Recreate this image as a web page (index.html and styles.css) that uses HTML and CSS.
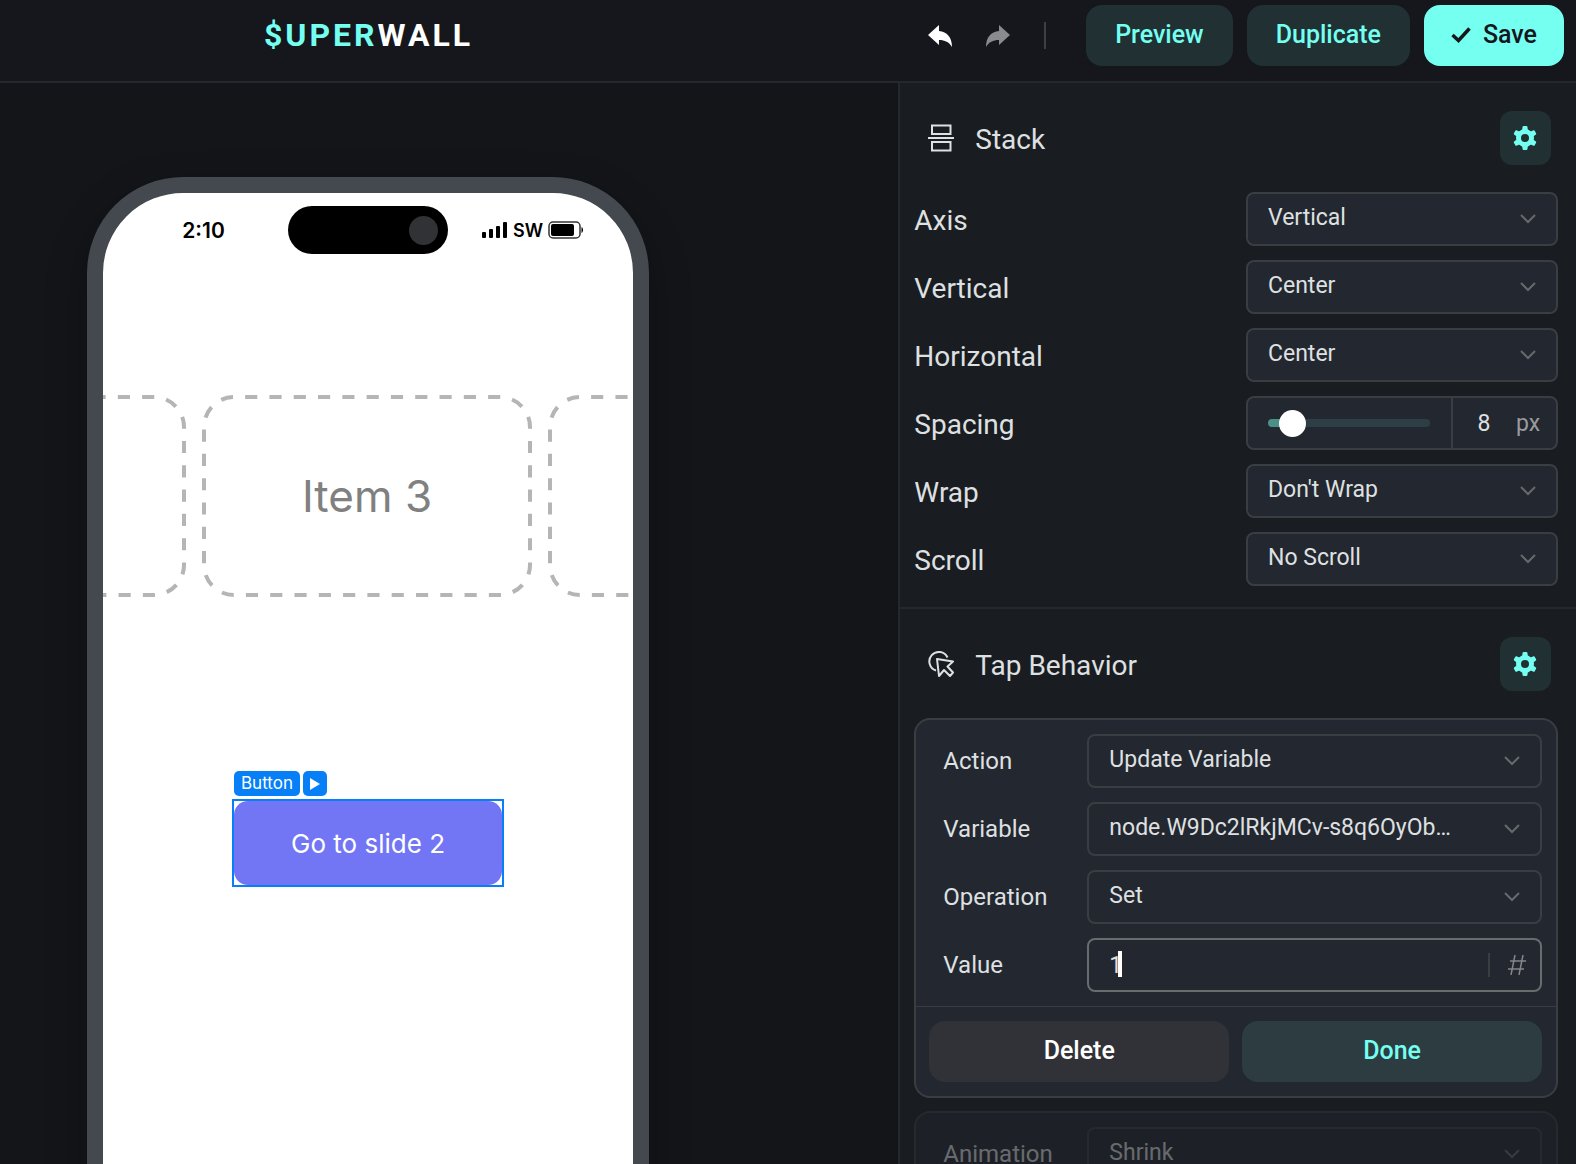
FILE: index.html
```
<!DOCTYPE html>
<html lang="en">
<head>
    <meta charset="UTF-8">
    <meta name="viewport" content="width=device-width, initial-scale=1">
    <title>Superwall Editor</title>
    <link rel="stylesheet" href="styles.css">
</head>
<body>
<!-- shared icons -->
<svg class="sprite" aria-hidden="true">
    <symbol id="chevron" viewBox="0 0 16 10">
        <path d="M1 1l7 7 7-7" fill="none" stroke="currentColor" stroke-width="2"/>
    </symbol>
    <symbol id="arrow" viewBox="0 0 24 22">
        <path d="M11 0v6c8 1 13 6 13 16-3-5-7-7-13-7v5L0 10z" fill="currentColor"/>
    </symbol>
    <symbol id="gear" viewBox="0 0 24 24">
        <circle cx="12" cy="12" r="6.500" fill="none" stroke="currentColor" stroke-width="5"/>
        <path fill="currentColor" d="M9 5l.6-4.200Q9.800 0 10.600 0h2.800q.8 0 1 .8L15 5z"/>
        <path fill="currentColor" d="M9 5l.6-4.200Q9.800 0 10.600 0h2.800q.8 0 1 .8L15 5z" transform="rotate(60 12 12)"/>
        <path fill="currentColor" d="M9 5l.6-4.200Q9.800 0 10.600 0h2.800q.8 0 1 .8L15 5z" transform="rotate(120 12 12)"/>
        <path fill="currentColor" d="M9 5l.6-4.200Q9.800 0 10.600 0h2.800q.8 0 1 .8L15 5z" transform="rotate(180 12 12)"/>
        <path fill="currentColor" d="M9 5l.6-4.200Q9.800 0 10.600 0h2.800q.8 0 1 .8L15 5z" transform="rotate(240 12 12)"/>
        <path fill="currentColor" d="M9 5l.6-4.200Q9.800 0 10.600 0h2.800q.8 0 1 .8L15 5z" transform="rotate(300 12 12)"/>
    </symbol>
    <symbol id="slot" viewBox="0 0 330 202">
        <rect x="2" y="2" width="326" height="198" rx="30" pathLength="984" fill="none" stroke="#b5b5b5" stroke-width="4" stroke-dasharray="12 12" stroke-dashoffset="-11"/>
    </symbol>
</svg>

<header id="header">
    <div class="brand"><span>$UPER</span>WALL</div>
    <div class="actions">
        <button class="icon-btn" aria-label="Undo"><svg><use href="#arrow"/></svg></button>
        <button class="icon-btn redo" aria-label="Redo"><svg><use href="#arrow"/></svg></button>
        <i class="sep"></i>
        <button class="btn">Preview</button>
        <button class="btn">Duplicate</button>
        <button class="btn save">
            <svg viewBox="0 0 20 16"><path d="M1.500 8l6 5.500L18.500 1.500" fill="none" stroke="currentColor" stroke-width="3.500"/></svg>
            Save
        </button>
    </div>
</header>

<main id="editor">
    <section id="canvas">
        <div class="phone">
            <div class="status">
                <span class="time">2:10</span>
                <div class="island"><i></i></div>
                <div class="signal">
                    <svg class="bars" viewBox="0 0 26 16">
                        <rect x="0" y="10" width="4" height="6" rx="1"/>
                        <rect x="7" y="7" width="4" height="9" rx="1"/>
                        <rect x="14" y="4" width="4" height="12" rx="1"/>
                        <rect x="21" y="0" width="4" height="16" rx="1"/>
                    </svg>
                    <span>SW</span>
                    <svg class="battery" viewBox="0 0 36 18">
                        <rect x="1" y="1" width="31" height="16" rx="4" fill="none" stroke="#333" stroke-width="1.500"/>
                        <rect x="3" y="3" width="23" height="12" rx="2"/>
                        <path d="M33.500 6c2 1 2 5 0 6z"/>
                    </svg>
                </div>
            </div>
            <div class="carousel">
                <div class="slide"><svg><use href="#slot"/></svg></div>
                <div class="slide"><svg><use href="#slot"/></svg><span>Item 3</span></div>
                <div class="slide"><svg><use href="#slot"/></svg></div>
            </div>
            <div class="selected">
                <div class="tags">
                    <span class="tag">Button</span>
                    <button class="tag play" aria-label="Play"><svg viewBox="0 0 10 12"><path d="M0 0l10 6-10 6z" fill="#fff"/></svg></button>
                </div>
                <div class="frame">
                    <button class="slide-btn">Go to slide 2</button>
                </div>
            </div>
        </div>
    </section>

    <aside id="panel">
        <section class="group">
            <div class="group-head">
                <svg viewBox="0 0 26 28"><path d="M4 1.500h18.500v8.500H4zM0 14h26M4 18h18.500v8.500H4z" fill="none" stroke="currentColor" stroke-width="2"/></svg>
                <h2>Stack</h2>
                <button class="gear" aria-label="Stack settings"><svg><use href="#gear"/></svg></button>
            </div>
            <div class="row">
                <label for="axis">Axis</label>
                <div class="select"><select id="axis"><option>Vertical</option></select><svg><use href="#chevron"/></svg></div>
            </div>
            <div class="row">
                <label for="vertical">Vertical</label>
                <div class="select"><select id="vertical"><option>Center</option></select><svg><use href="#chevron"/></svg></div>
            </div>
            <div class="row">
                <label for="horizontal">Horizontal</label>
                <div class="select"><select id="horizontal"><option>Center</option></select><svg><use href="#chevron"/></svg></div>
            </div>
            <div class="row">
                <label for="spacing">Spacing</label>
                <div class="spacing">
                    <input type="range" id="spacing" min="0" max="100" value="8">
                    <input type="text" class="num" value="8" aria-label="Spacing value">
                    <span>px</span>
                </div>
            </div>
            <div class="row">
                <label for="wrap">Wrap</label>
                <div class="select"><select id="wrap"><option>Don't Wrap</option></select><svg><use href="#chevron"/></svg></div>
            </div>
            <div class="row">
                <label for="scroll">Scroll</label>
                <div class="select"><select id="scroll"><option>No Scroll</option></select><svg><use href="#chevron"/></svg></div>
            </div>
        </section>

        <section class="group">
            <div class="group-head">
                <svg viewBox="0 0 26 28"><path d="M8 20.500A9.500 9.500 0 1 1 19.500 7.500M9 9l16 2.500-5.500 5 5.500 6-3 3.500-6-6-5 6z" fill="none" stroke="currentColor" stroke-width="2" stroke-linejoin="round"/></svg>
                <h2>Tap Behavior</h2>
                <button class="gear" aria-label="Tap behavior settings"><svg><use href="#gear"/></svg></button>
            </div>
            <div class="card">
                <div class="fields">
                    <label for="action">Action</label>
                    <div class="select"><select id="action"><option>Update Variable</option></select><svg><use href="#chevron"/></svg></div>
                    <label for="variable">Variable</label>
                    <div class="select"><select id="variable"><option>node.W9Dc2lRkjMCv-s8q6OyOb…</option></select><svg><use href="#chevron"/></svg></div>
                    <label for="operation">Operation</label>
                    <div class="select"><select id="operation"><option>Set</option></select><svg><use href="#chevron"/></svg></div>
                    <label for="value">Value</label>
                    <div class="value">
                        <input type="text" id="value" value="1">
                        <i class="caret"></i>
                        <button class="hash" aria-label="Number"><svg viewBox="0 0 18 20"><path d="M7 0L3 20M15 0l-4 20M2 6h16M0 14h16" fill="none" stroke="currentColor" stroke-width="1.500"/></svg></button>
                    </div>
                </div>
                <div class="card-foot">
                    <button class="btn delete">Delete</button>
                    <button class="btn done">Done</button>
                </div>
            </div>
            <div class="card faded">
                <div class="fields">
                    <label for="animation">Animation</label>
                    <div class="select"><select id="animation"><option>Shrink</option></select><svg><use href="#chevron"/></svg></div>
                </div>
            </div>
        </section>
    </aside>
</main>
</body>
</html>
```
FILE: styles.css
```
* {
    box-sizing: border-box;
    margin: 0;
    padding: 0;
}

body {
    display: flex;
    flex-direction: column;
    height: 100vh;
    overflow: hidden;
    background: #131519;
    color: #dfe0e1;
    font-family: Roboto, "Liberation Sans", sans-serif;
}

button, input, select {
    font-family: inherit;
    color: inherit;
    border: 0;
    background: none;
    outline: 0;
}

button, select {
    cursor: pointer;
}

svg {
    display: block;
    flex: none;
}

.sprite {
    position: absolute;
    width: 0;
    height: 0;
}

/* header */
#header {
    flex: none;
    display: flex;
    justify-content: space-between;
    align-items: flex-start;
    padding: 5px 12px 15px 264px;
    border-bottom: 2px solid #25292d;
    background: #15171c;
}

.brand {
    font-size: 32px;
    font-weight: 700;
    line-height: 61px;
    letter-spacing: 3px;
    color: #fff;
}

.brand span {
    color: #74fff0;
}

.actions {
    display: flex;
    align-items: center;
    gap: 14px;
}

.icon-btn {
    width: 44px;
    padding: 0 10px;
    color: #fff;
}

.icon-btn svg {
    width: 24px;
    height: 22px;
}

.redo {
    color: #8a8b8e;
    transform: scaleX(-1);
}

.sep {
    width: 2px;
    height: 27px;
    margin: 0 26px 0 10px;
    background: #3c3f43;
}

.btn {
    display: flex;
    align-items: center;
    justify-content: center;
    gap: 12px;
    height: 61px;
    padding: 0 29px 2px;
    border-radius: 16px;
    background: #203033;
    color: #74fff0;
    font-size: 25px;
    font-weight: 500;
}

.save {
    padding: 0 27px 2px;
    background: #74fff0;
    color: #15171c;
}

.save svg {
    width: 20px;
    height: 16px;
}

/* layout */
#editor {
    flex: 1;
    min-height: 0;
    display: flex;
}

#canvas {
    flex: 1;
    padding: 94px 87px 0;
    overflow: hidden;
}

#panel {
    flex: 0 0 43%;
    overflow: hidden;
    border-left: 2px solid #25292d;
    background: #191c20;
}

/* phone */
.phone {
    width: 562px;
    height: 1200px;
    border: 16px solid #444950;
    border-radius: 96px;
    background: #fff;
    color: #000;
    font-family: Inter, "Liberation Sans", sans-serif;
    overflow: hidden;
    box-shadow: 0 16px 40px rgba(0, 0, 0, .3);
}

.status {
    display: grid;
    grid-template-columns: 1fr 160px 1fr;
    align-items: center;
    padding-top: 13px;
}

.time {
    padding-left: 16px;
    text-align: center;
    font-size: 21px;
    font-weight: 600;
}

.island {
    display: flex;
    justify-content: flex-end;
    align-items: center;
    height: 48px;
    padding-right: 10px;
    border-radius: 24px;
    background: #000;
}

.island i {
    width: 29px;
    height: 29px;
    border-radius: 50%;
    background: #303236;
}

.signal {
    display: flex;
    align-items: center;
    gap: 5px;
    padding-left: 34px;
    font-size: 18px;
    font-weight: 600;
}

.bars {
    width: 26px;
    height: 16px;
}

.battery {
    width: 36px;
    height: 18px;
}

.carousel {
    display: flex;
    justify-content: center;
    gap: 16px;
    margin-top: 141px;
    padding-right: 2px;
}

.slide {
    flex: none;
    display: grid;
    place-items: center;
    width: 330px;
    height: 202px;
}

.slide > * {
    grid-area: 1 / 1;
}

.slide svg {
    width: 330px;
    height: 202px;
}

.slide span {
    font-size: 44px;
    color: #808080;
}

.selected {
    width: 272px;
    margin: 174px auto 0;
}

.tags {
    display: flex;
    gap: 3px;
    margin: 0 0 3px 2px;
}

.tag {
    height: 25px;
    padding: 0 7px;
    border-radius: 5px;
    background: #077ff6;
    color: #fff;
    font-size: 17px;
    line-height: 25px;
}

.play svg {
    width: 10px;
    height: 12px;
}

.frame {
    border: 2px solid #077ff6;
}

.slide-btn {
    display: block;
    width: 100%;
    height: 84px;
    border-radius: 14px;
    background: #7376f4;
    color: #fff;
    font-size: 26px;
}

/* panel */
.group {
    padding: 28px 18px 21px 14px;
    border-bottom: 2px solid #25292d;
}

.group-head {
    display: flex;
    align-items: center;
    padding: 0 7px 27px 14px;
}

.group-head > svg {
    width: 26px;
    height: 28px;
}

.group-head h2 {
    flex: 1;
    padding: 2px 0 0 21px;
    font-size: 28px;
    font-weight: 400;
}

.gear {
    width: 51px;
    height: 54px;
    padding: 0 13px;
    border-radius: 12px;
    background: #203033;
    color: #74fff0;
}

.gear svg {
    width: 24px;
    height: 24px;
}

.row {
    display: grid;
    grid-template-columns: 1fr 312px;
    align-items: center;
    font-size: 28px;
}

.row label {
    padding-top: 2px;
}

.row + .row {
    margin-top: 14px;
}

.select {
    display: grid;
    align-items: center;
}

.select > * {
    grid-area: 1 / 1;
}

.select select {
    appearance: none;
    width: 100%;
    height: 54px;
    padding: 0 60px 4px 20px;
    border: 2px solid #3a3d41;
    border-radius: 8px;
    background: #23272f;
    font-size: 23px;
}

.select svg {
    justify-self: end;
    width: 16px;
    height: 10px;
    margin-right: 22px;
    color: #66696d;
    pointer-events: none;
}

.spacing {
    display: flex;
    align-items: center;
    height: 54px;
    padding-left: 20px;
    border: 2px solid #3a3d41;
    border-radius: 8px;
    background: #23272f;
    font-size: 23px;
}

.spacing input[type=range] {
    appearance: none;
    flex: 1;
    min-width: 0;
    height: 8px;
    margin-right: 21px;
    border-radius: 4px;
    background: linear-gradient(to right, #4a9089 15%, #2c3f44 15%);
}

.spacing input[type=range]::-webkit-slider-thumb {
    appearance: none;
    width: 27px;
    height: 27px;
    border-radius: 50%;
    background: #fff;
}

.spacing .num {
    width: 64px;
    height: 50px;
    border-left: 2px solid #3a3d41;
    font-size: 23px;
    text-align: center;
}

.spacing span {
    width: 41px;
    padding-left: 1px;
    color: #999b9e;
}

.card {
    border: 2px solid #3a3d41;
    border-radius: 16px;
    background: #23272f;
}

.card + .card {
    margin-top: 13px;
}

.fields {
    display: grid;
    grid-template-columns: 144px 1fr;
    align-items: center;
    gap: 14px 0;
    padding: 14px 14px 14px 27px;
    font-size: 24px;
}

.value {
    position: relative;
    display: flex;
    align-items: center;
    height: 54px;
    border: 2px solid #696c6f;
    border-radius: 8px;
}

.value input {
    flex: 1;
    min-width: 0;
    height: 50px;
    padding-left: 20px;
    font-size: 23px;
}

.caret {
    position: absolute;
    left: 29px;
    top: 11px;
    width: 4px;
    height: 26px;
    background: #fff;
}

.hash {
    height: 24px;
    padding: 0 14px 0 18px;
    border-left: 2px solid #3a3d41;
    color: #85878a;
}

.hash svg {
    width: 18px;
    height: 20px;
}

.card-foot {
    display: grid;
    grid-template-columns: 1fr 1fr;
    gap: 13px;
    padding: 14px 14px 14px 13px;
    border-top: 1px solid #3a3d41;
}

.delete {
    background: #303237;
    color: #fff;
}

.done {
    background: #2c3c40;
}

.faded {
    opacity: .4;
}
```
